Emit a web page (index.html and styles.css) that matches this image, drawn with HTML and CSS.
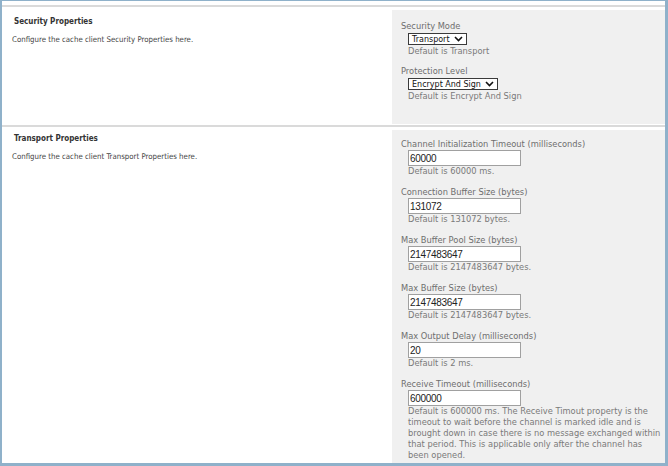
FILE: index.html
```html
<!DOCTYPE html>
<html>
<head>
  <meta charset="utf-8">
  <title>Cache Client Properties</title>
  <link rel="stylesheet" href="styles.css">
</head>
<body>
  <div class="frame">
    <!-- Security -->
    <div class="section">
      <div class="section-info">
        <div class="section-title">Security Properties</div>
        <div class="section-desc">Configure the cache client Security Properties here.</div>
      </div>
      <div class="section-fields first">
        <div class="field">
          <div class="field-label">Security Mode</div>
          <div class="select">
            <span>Transport</span>
            <svg width="9" height="6" viewBox="0 0 9 6"><path d="M1 1 L4.5 4.5 L8 1" fill="none" stroke="#111" stroke-width="1.6"/></svg>
          </div>
          <div class="field-hint">Default is Transport</div>
        </div>
        <div class="field">
          <div class="field-label">Protection Level</div>
          <div class="select">
            <span>Encrypt And Sign</span>
            <svg width="9" height="6" viewBox="0 0 9 6"><path d="M1 1 L4.5 4.5 L8 1" fill="none" stroke="#111" stroke-width="1.6"/></svg>
          </div>
          <div class="field-hint">Default is Encrypt And Sign</div>
        </div>
      </div>
    </div>

    <!-- Transport -->
    <div class="section last">
      <div class="section-info">
        <div class="section-title">Transport Properties</div>
        <div class="section-desc">Configure the cache client Transport Properties here.</div>
      </div>
      <div class="section-fields">
        <div class="field">
          <div class="field-label">Channel Initialization Timeout (milliseconds)</div>
          <input class="text-input" type="text" value="60000">
          <div class="field-hint">Default is 60000 ms.</div>
        </div>
        <div class="field">
          <div class="field-label">Connection Buffer Size (bytes)</div>
          <input class="text-input" type="text" value="131072">
          <div class="field-hint">Default is 131072 bytes.</div>
        </div>
        <div class="field">
          <div class="field-label">Max Buffer Pool Size (bytes)</div>
          <input class="text-input" type="text" value="2147483647">
          <div class="field-hint">Default is 2147483647 bytes.</div>
        </div>
        <div class="field">
          <div class="field-label">Max Buffer Size (bytes)</div>
          <input class="text-input" type="text" value="2147483647">
          <div class="field-hint">Default is 2147483647 bytes.</div>
        </div>
        <div class="field">
          <div class="field-label">Max Output Delay (milliseconds)</div>
          <input class="text-input" type="text" value="20">
          <div class="field-hint">Default is 2 ms.</div>
        </div>
        <div class="field">
          <div class="field-label">Receive Timeout (milliseconds)</div>
          <input class="text-input" type="text" value="600000">
          <div class="field-hint">Default is 600000 ms. The Receive Timout property is the timeout to wait before the channel is marked idle and is brought down in case there is no message exchanged within that period. This is applicable only after the channel has been opened.</div>
        </div>
      </div>
    </div>
  </div>
</body>
</html>
```

FILE: styles.css
```css
body {
  margin: 0;
  padding: 0;
  background: white;
  font-family: 'DejaVu Sans', Verdana, sans-serif;
}

.frame {
  width: 668px;
  height: 466px;
  box-sizing: border-box;
  border: 2px solid #8fb1ca;
  border-top-width: 1px;
  border-right-width: 3px;
  border-bottom-width: 3px;
  padding-top: 4px;
  overflow: hidden;
  display: flex;
  flex-direction: column;
}

.section {
  display: flex;
  border-top: 2px solid #dadada;
  padding-top: 3px;
  padding-bottom: 1px;
}

.section.last {
  flex: 1;
  min-height: 0;
  padding-bottom: 0;
}

.section-info {
  flex: none;
  width: 380px;
  padding-left: 10px;
  padding-top: 6px;
}

.section.last .section-info {
  padding-top: 3px;
}

.section-title {
  font-family: 'DejaVu Sans Condensed', Tahoma, sans-serif;
  font-size: 8px;
  font-weight: bold;
  color: #333;
  padding-left: 2px;
  line-height: 12px;
}

.section-desc {
  font-family: 'DejaVu Sans Condensed', Tahoma, sans-serif;
  font-size: 7.8px;
  color: #444;
  margin-top: 6px;
  line-height: 12px;
}

.section-fields {
  flex: 1;
  background: #f0f0f0;
  padding: 8px 6px 0 9px;
  display: flex;
  flex-direction: column;
  gap: 9px;
}

.section-fields.first {
  height: 114px;
  box-sizing: border-box;
  padding-top: 10px;
  gap: 8px;
}

.field-label {
  font-size: 8.3px;
  line-height: 12px;
  color: #6e6e6e;
}

.field-hint {
  font-size: 8.3px;
  line-height: 11px;
  color: #7a7a7a;
  margin-left: 7px;
  width: 256px;
}

.select {
  display: inline-flex;
  align-items: center;
  gap: 4px;
  margin-left: 7px;
  margin-top: 1px;
  margin-bottom: 1px;
  height: 10px;
  padding: 0 3px 0 3px;
  border: 1px solid #3a3a3a;
  background: white;
  font-size: 8px;
  color: #111;
}

.field {
  display: flex;
  flex-direction: column;
  align-items: flex-start;
}

.text-input {
  margin: 0 0 0 7px;
  width: 113px;
  height: 16px;
  box-sizing: border-box;
  border: 1px solid #a0a0a0;
  padding: 0 1px;
  font-family: 'Liberation Sans', Arial, sans-serif;
  font-size: 10px;
  letter-spacing: -0.3px;
  color: #222;
  background: white;
}
```
